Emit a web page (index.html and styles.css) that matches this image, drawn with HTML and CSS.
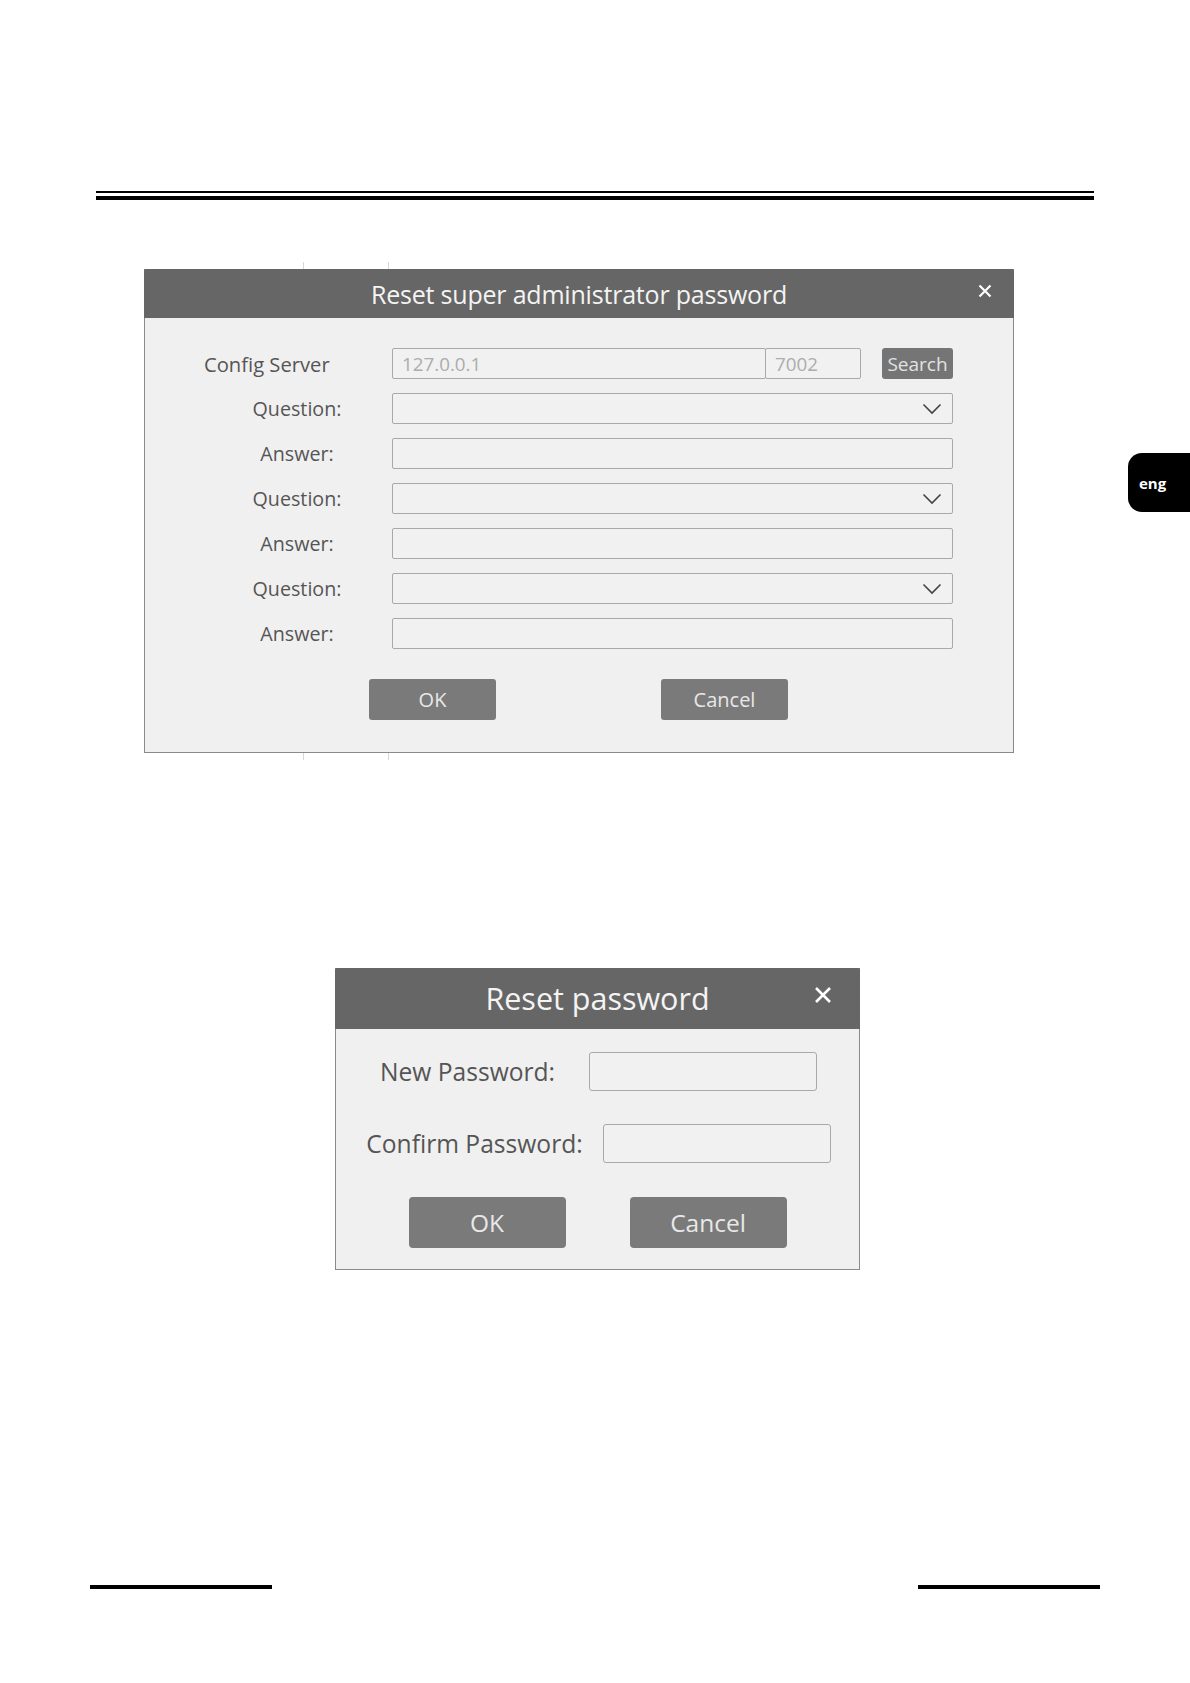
FILE: index.html
```html
<!DOCTYPE html>
<html lang="en">
<head>
<meta charset="utf-8">
<title>Reset password</title>
<link rel="stylesheet" href="styles.css">
</head>
<body>
<div class="page">
  <div class="rule-top">
    <div class="rule-thin"></div>
    <div class="rule-thick"></div>
  </div>

  <div class="ticks ticks-top"><span class="tick tick-a"></span><span class="tick tick-b"></span></div>
  <section class="dlg dlg-admin">
    <header class="dlg-head">
      <h2 class="dlg-title">Reset super administrator password</h2>
      <svg class="dlg-close" width="14" height="14" viewBox="0 0 14 14"><path d="M1.5 1.5 L12.5 12.5 M12.5 1.5 L1.5 12.5" stroke="#fff" stroke-width="2.2" fill="none"/></svg>
    </header>
    <div class="dlg-body">
      <div class="frow">
        <label class="flabel flabel-left">Config Server</label>
        <div class="fctrl fctrl-server">
          <div class="inp inp-ip">127.0.0.1</div>
          <div class="inp inp-port">7002</div>
          <button class="btn btn-search">Search</button>
        </div>
      </div>
      <div class="frow">
        <label class="flabel">Question:</label>
        <div class="inp inp-select"><svg class="chev" width="20" height="12" viewBox="0 0 20 12"><polyline points="1.5,1.5 10,10 18.5,1.5" fill="none" stroke="#444" stroke-width="1.6"/></svg></div>
      </div>
      <div class="frow">
        <label class="flabel">Answer:</label>
        <div class="inp"></div>
      </div>
      <div class="frow">
        <label class="flabel">Question:</label>
        <div class="inp inp-select"><svg class="chev" width="20" height="12" viewBox="0 0 20 12"><polyline points="1.5,1.5 10,10 18.5,1.5" fill="none" stroke="#444" stroke-width="1.6"/></svg></div>
      </div>
      <div class="frow">
        <label class="flabel">Answer:</label>
        <div class="inp"></div>
      </div>
      <div class="frow">
        <label class="flabel">Question:</label>
        <div class="inp inp-select"><svg class="chev" width="20" height="12" viewBox="0 0 20 12"><polyline points="1.5,1.5 10,10 18.5,1.5" fill="none" stroke="#444" stroke-width="1.6"/></svg></div>
      </div>
      <div class="frow">
        <label class="flabel">Answer:</label>
        <div class="inp"></div>
      </div>
      <div class="btnrow btnrow-admin">
        <button class="btn btn-main">OK</button>
        <button class="btn btn-main">Cancel</button>
      </div>
    </div>
  </section>
  <div class="ticks ticks-bottom"><span class="tick tick-a"></span><span class="tick tick-b"></span></div>

  <section class="dlg dlg-reset">
    <header class="dlg-head dlg-head-reset">
      <h2 class="dlg-title dlg-title-reset">Reset password</h2>
      <svg class="dlg-close dlg-close-reset" width="18" height="18" viewBox="0 0 18 18"><path d="M2 2 L16 16 M16 2 L2 16" stroke="#fff" stroke-width="2.6" fill="none"/></svg>
    </header>
    <div class="dlg-body dlg-body-reset">
      <div class="prow prow-new">
        <label class="plabel">New Password:</label>
        <div class="pinp"></div>
      </div>
      <div class="prow prow-confirm">
        <label class="plabel">Confirm Password:</label>
        <div class="pinp"></div>
      </div>
      <div class="btnrow btnrow-reset">
        <button class="btn btn-big">OK</button>
        <button class="btn btn-big">Cancel</button>
      </div>
    </div>
  </section>

  <footer class="foot">
    <span class="foot-line"></span>
    <span class="foot-line"></span>
  </footer>

  <div class="lang-tab">eng</div>
</div>
</body>
</html>
```

FILE: styles.css
```css
html, body {
  margin: 0;
  padding: 0;
  background: #ffffff;
}

.page {
  position: relative;
  width: 1190px;
  height: 1683px;
  font-family: "Open Sans", "Noto Sans", sans-serif;
  overflow: hidden;
}

/* top double rule */
.rule-top {
  margin: 0 0 0 96px;
  padding-top: 191px;
  width: 998px;
}
.rule-thin {
  height: 2px;
  background: #000;
}
.rule-thick {
  margin-top: 3px;
  height: 4px;
  background: #000;
}

/* faint table ticks around first dialog */
.ticks {
  display: flex;
  height: 7px;
  margin-left: 303px;
  gap: 84px;
}
.ticks-top {
  margin-top: 62px;
}
.tick {
  width: 1px;
  height: 7px;
  background: #d6d6d6;
}

/* dialogs */
.dlg {
  border: 1px solid #8a8a8a;
  background: #f0f0f0;
  box-sizing: border-box;
}
.dlg-admin {
  margin-left: 144px;
  width: 870px;
}
.dlg-head {
  position: relative;
  height: 49px;
  background: #666666;
  display: flex;
  align-items: center;
  justify-content: center;
  margin: -1px -1px 0 -1px;
  border-radius: 2px 2px 0 0;
}
.dlg-title {
  margin: 0;
  font-weight: 400;
  font-size: 25px;
  color: #f4f4f4;
  letter-spacing: -0.2px;
}
.dlg-close {
  position: absolute;
  right: 22px;
  top: 15px;
  display: block;
}

.dlg-body {
  padding: 30px 60px 32px 59px;
  display: flex;
  flex-direction: column;
  gap: 14px;
}

.frow {
  display: flex;
  align-items: center;
  height: 31px;
}
.flabel {
  width: 188px;
  flex: none;
  text-align: center;
  font-size: 19.7px;
  color: #555555;
  padding-right: 2px;
  box-sizing: border-box;
}
.flabel-left {
  text-align: left;
  padding-left: 0;
  font-size: 20.2px;
}

.fctrl-server {
  display: flex;
  align-items: stretch;
  height: 31px;
  flex: 1;
}

.inp {
  flex: 1;
  height: 31px;
  box-sizing: border-box;
  border: 1px solid #a9a9a9;
  border-radius: 2px;
  background: #f1f1f1;
  display: flex;
  align-items: center;
  padding: 0 9px;
  font-size: 18.8px;
  color: #acacac;
}
.inp-ip {
  flex: 0 0 374px;
}
.inp-port {
  flex: 0 0 96px;
  margin-left: -1px;
}
.inp-select {
  justify-content: flex-end;
  padding-right: 10px;
}
.chev {
  display: block;
}

.btn {
  border: none;
  background: #7a7a7a;
  color: #e8e8e8;
  font-family: "Open Sans", "Noto Sans", sans-serif;
  border-radius: 3px;
  padding: 0;
  cursor: default;
}
.btn-search {
  margin-left: auto;
  width: 71px;
  font-size: 19px;
  color: #e2e2e2;
  background: #757575;
}
.btnrow {
  display: flex;
  justify-content: center;
}
.btnrow-admin {
  margin-top: 16px;
  gap: 165px;
}
.btn-main {
  width: 127px;
  height: 41px;
  font-size: 20px;
}

.ticks-bottom {
  margin-top: 0;
}

/* reset password dialog */
.dlg-reset {
  margin-top: 208px;
  margin-left: 335px;
  width: 525px;
}
.dlg-head-reset {
  height: 61px;
}
.dlg-title-reset {
  font-size: 30.5px;
  letter-spacing: 0;
  margin-top: -2px;
}
.dlg-close-reset {
  right: 28px;
  top: 18px;
}
.dlg-body-reset {
  padding: 23px 0 21px 0;
  gap: 0;
}
.prow {
  display: flex;
  justify-content: center;
  align-items: center;
  height: 39px;
  padding-left: 2px;
}
.prow-new {
  gap: 34px;
}
.prow-confirm {
  gap: 20px;
  margin-top: 33px;
}
.plabel {
  font-size: 24.6px;
  color: #555555;
}
.pinp {
  width: 228px;
  height: 39px;
  box-sizing: border-box;
  border: 1px solid #a9a9a9;
  border-radius: 3px;
  background: #f1f1f1;
}
.btnrow-reset {
  margin-top: 34px;
  gap: 64px;
}
.btn-big {
  width: 157px;
  height: 51px;
  font-size: 24.5px;
  border-radius: 4px;
}

/* footer rules */
.foot {
  display: flex;
  justify-content: space-between;
  margin: 315px 0 0 90px;
  width: 1010px;
}
.foot-line {
  width: 182px;
  height: 4px;
  background: #000;
}

/* language tab on the page edge */
.lang-tab {
  position: absolute;
  left: 1128px;
  top: 453px;
  width: 62px;
  height: 59px;
  box-sizing: border-box;
  background: #000;
  border-radius: 14px 0 0 14px;
  color: #fff;
  font-family: "Open Sans", "Noto Sans", sans-serif;
  font-weight: 700;
  font-size: 15px;
  display: flex;
  align-items: center;
  padding-left: 11px;
}
```
